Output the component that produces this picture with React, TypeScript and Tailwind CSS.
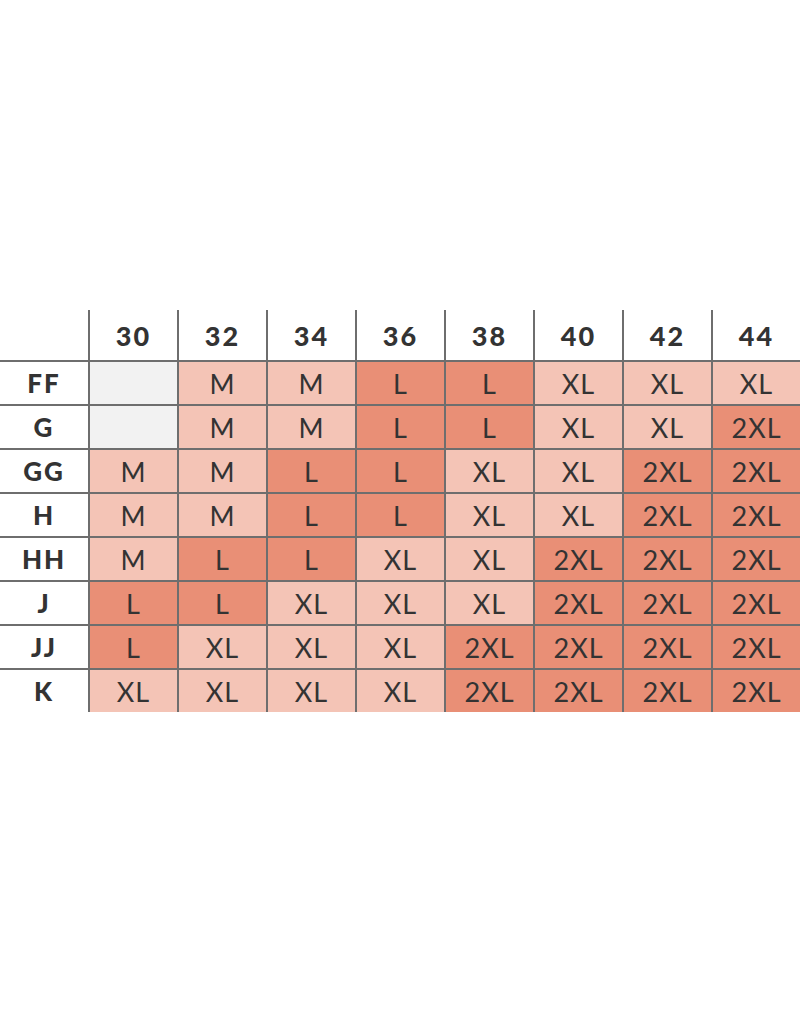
import React from "react";

const cols = ["30", "32", "34", "36", "38", "40", "42", "44"];
const rows: [string, string[]][] = [
  ["FF", ["", "M", "M", "L", "L", "XL", "XL", "XL"]],
  ["G", ["", "M", "M", "L", "L", "XL", "XL", "2XL"]],
  ["GG", ["M", "M", "L", "L", "XL", "XL", "2XL", "2XL"]],
  ["H", ["M", "M", "L", "L", "XL", "XL", "2XL", "2XL"]],
  ["HH", ["M", "L", "L", "XL", "XL", "2XL", "2XL", "2XL"]],
  ["J", ["L", "L", "XL", "XL", "XL", "2XL", "2XL", "2XL"]],
  ["JJ", ["L", "XL", "XL", "XL", "2XL", "2XL", "2XL", "2XL"]],
  ["K", ["XL", "XL", "XL", "XL", "2XL", "2XL", "2XL", "2XL"]],
];

function cellBg(v: string) {
  if (v === "") return "bg-[#f2f2f2]";
  if (v === "L" || v === "2XL") return "bg-[#e98f76]";
  return "bg-[#f4c4b6]";
}

export default function App() {
  return (
    <div
      className="w-[800px] h-[1023px] bg-white pt-[310px] text-[#333333]"
      style={{ fontFamily: "Lato, 'Open Sans', sans-serif" }}
    >
      <div className="grid grid-cols-[88px_repeat(8,89px)]">
        <div className="h-[50px]" />
        {cols.map((c) => (
          <div
            key={c}
            className="h-[50px] border-l-2 border-[#6e6e6e] flex items-center justify-center pt-[2px] text-[27px] font-black tracking-[2px]"
          >
            {c}
          </div>
        ))}
        {rows.map(([label, vals]) => (
          <React.Fragment key={label}>
            <div className="h-[44px] border-t-2 border-[#6e6e6e] flex items-center justify-center text-[26px] font-black tracking-[2px]">
              {label}
            </div>
            {vals.map((v, i) => (
              <div
                key={i}
                className={`h-[44px] border-t-2 border-l-2 border-[#6e6e6e] flex items-center justify-center pt-[2px] text-[27px] tracking-[1px] ${cellBg(v)}`}
              >
                {v}
              </div>
            ))}
          </React.Fragment>
        ))}
      </div>
    </div>
  );
}
